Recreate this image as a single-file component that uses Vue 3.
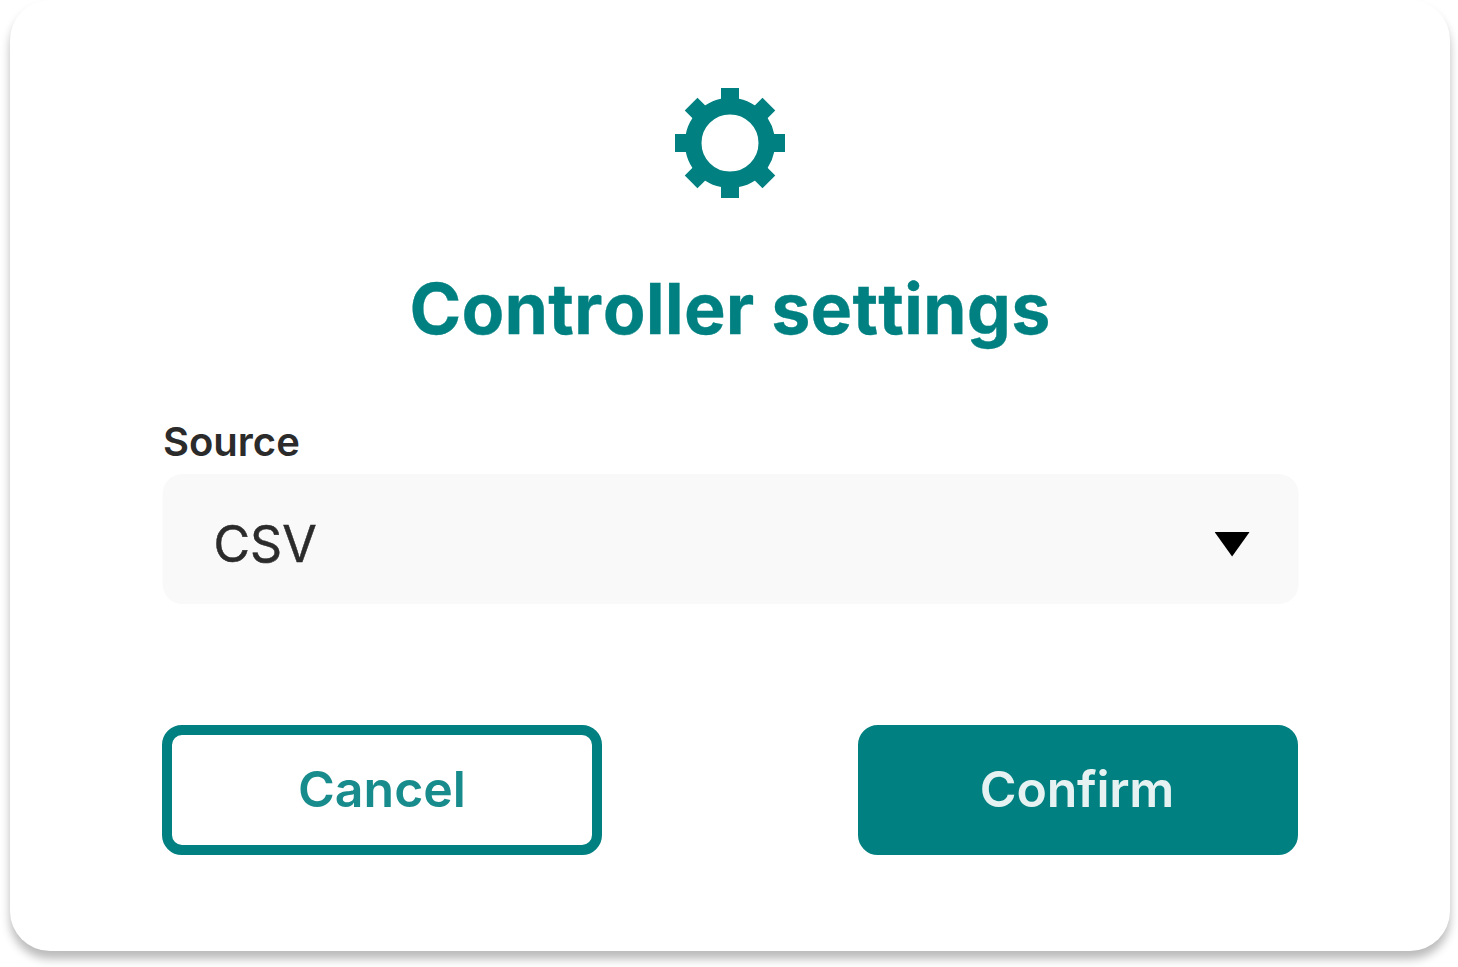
<template>
  <main class="page">
    <form class="card" @submit.prevent>
      <!-- Gear -->
      <svg class="card__icon" viewBox="-55 -55 110 110" aria-hidden="true">
        <circle r="36.75" fill="none" stroke="currentColor" stroke-width="16.5" />
        <rect
          v-for="angle in teeth"
          :key="angle"
          x="-9"
          y="-55"
          width="18"
          height="17"
          fill="currentColor"
          :transform="`rotate(${angle})`"
        />
      </svg>

      <h1 class="card__title">Controller settings</h1>

      <!-- Source -->
      <div class="field">
        <span id="source-label" class="field__label">Source</span>
        <button type="button" class="field__select" aria-labelledby="source-label">
          <span class="field__value">{{ source }}</span>
          <svg class="field__arrow" viewBox="0 0 35 25" aria-hidden="true">
            <path d="M0 0H35L17.5 24.5Z" />
          </svg>
        </button>
      </div>

      <!-- Actions -->
      <div class="actions">
        <button type="button" class="btn btn--outline">
          <span class="btn__label">Cancel</span>
        </button>
        <button type="submit" class="btn btn--solid">
          <span class="btn__label">Confirm</span>
        </button>
      </div>
    </form>
  </main>
</template>

<script setup>
import { ref } from "vue";

const source = ref("CSV");
const teeth = [0, 45, 90, 135, 180, 225, 270, 315];
</script>

<style>
body {
  margin: 0;
  background: #fff;
}
</style>

<style scoped>
.page {
  --teal: #008080;
  --ink: #2b2b2b;
  box-sizing: border-box;
  height: 967px;
  padding: 0 8px 0 10px;
  overflow: hidden;
  font-family: Inter, "Liberation Sans", sans-serif;
}

/* ── Card ── */
.card {
  box-sizing: border-box;
  display: flex;
  flex-direction: column;
  align-items: center;
  height: 950.6px;
  padding: 88px 152px 0;
  background: #fff;
  border-radius: 40px;
  box-shadow: 0 8px 10px rgba(0, 0, 0, 0.27);
}
.card__icon {
  flex-shrink: 0;
  width: 110px;
  height: 110px;
  color: var(--teal);
}
.card__title {
  margin: 69px 0 0;
  font-size: 70px;
  font-weight: 700;
  font-kerning: none;
  line-height: 84px;
  letter-spacing: 0.15px;
  white-space: nowrap;
  color: var(--teal);
  -webkit-text-stroke: 0.3px currentColor;
}

/* ── Source field ── */
.field {
  display: flex;
  flex-direction: column;
  width: 100%;
  margin-top: 67px;
}
.field__label {
  padding-left: 1px;
  font-size: 40px;
  font-weight: 600;
  line-height: 48px;
  color: var(--ink);
}
.field__select {
  box-sizing: border-box;
  display: flex;
  align-items: center;
  justify-content: space-between;
  width: 100%;
  height: 130px;
  margin-top: 7.7px;
  padding: 11px 49px 0 51px;
  border: 0;
  border-radius: 20px;
  background: #f9f9f9;
  font-family: inherit;
  transform: translateX(0.6px);
}
.field__value {
  font-size: 50px;
  line-height: 60px;
  color: var(--ink);
  -webkit-text-stroke: 0.5px currentColor;
}
.field__arrow {
  width: 35px;
  height: 25px;
}

/* ── Actions ── */
.actions {
  display: flex;
  justify-content: space-between;
  width: 100%;
  margin-top: 121px;
}
.btn {
  box-sizing: border-box;
  width: 440px;
  height: 130px;
  padding: 0 0 1px;
  border: 10px solid var(--teal);
  border-radius: 20px;
  font-family: inherit;
  font-size: 50px;
  font-weight: 600;
  line-height: 60px;
}
.btn__label {
  opacity: 0.9;
}
.btn--outline {
  background: #fff;
  color: var(--teal);
}
.btn--solid {
  padding-right: 2px;
  background: var(--teal);
  color: #fff;
  letter-spacing: -0.25px;
}
</style>
